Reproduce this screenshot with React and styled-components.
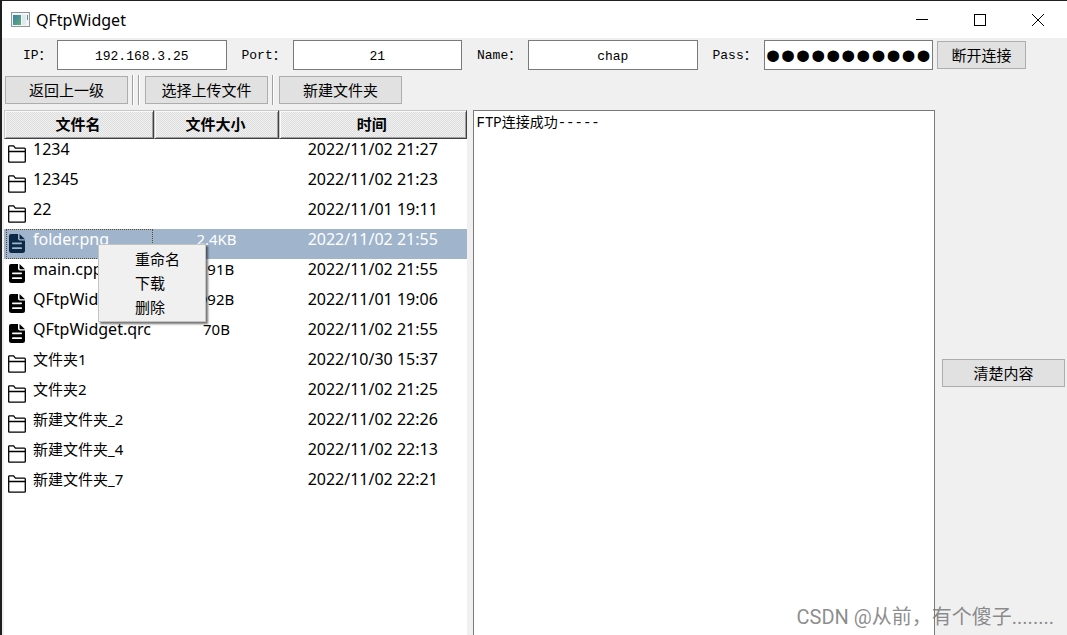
import React, { useState } from "react";
import styled, { createGlobalStyle } from "styled-components";

const uiFont = `"Liberation Mono", "Noto Sans CJK SC", monospace`;
const listFont = `"Noto Sans", "Noto Sans CJK SC", sans-serif`;

const GlobalStyle = createGlobalStyle`
  * {
    box-sizing: border-box;
  }

  body {
    margin: 0;
    color: #000;
    font-family: ${uiFont};
  }
`;

const Window = styled.div`
  position: relative;
  display: flex;
  flex-direction: column;
  height: 100vh;
  overflow: hidden;
  background: #f0f0f0;
  border-top: 1px solid #231f20;
  border-left: 2px solid #1e1e1e;
`;

const TitleBar = styled.header`
  display: flex;
  align-items: center;
  flex: none;
  height: 37px;
  padding-left: 9px;
  background: #fff;
`;

const Title = styled.h1`
  flex: 1;
  margin: 0 0 0 6px;
  font-family: ${listFont};
  font-size: 16px;
  font-weight: 400;
  line-height: 22px;
`;

const CaptionButton = styled.button`
  display: flex;
  align-items: center;
  justify-content: center;
  width: 58px;
  height: 37px;
  padding: 0;
  border: none;
  background: none;
`;

const ConnectBar = styled.form`
  display: flex;
  align-items: center;
  flex: none;
  padding: 2px 41px 0 0;
`;

const FieldLabel = styled.label`
  flex: none;
  width: ${(props) => (props.$first ? 55 : 66)}px;
  padding-top: 2px;
  padding-left: ${(props) => (props.$first ? 21 : 15)}px;
  font-size: 13px;
  line-height: 28px;
  white-space: nowrap;
`;

const Field = styled.input`
  flex: 1;
  min-width: 0;
  height: 30px;
  padding: 2px 1px 0;
  border: 1px solid #7a7a7a;
  border-radius: 0;
  outline: none;
  background: #fff;
  font-family: ${uiFont};
  font-size: 13px;
  text-align: center;

  &[type="password"] {
    padding-top: 0;
    font-family: "Liberation Sans", sans-serif;
    font-size: 43px;
    text-align: left;
  }
`;

const Button = styled.button`
  flex: none;
  width: ${(props) => (props.$compact ? 89 : 123)}px;
  height: 28px;
  padding: 0;
  border: 1px solid #adadad;
  background: #e1e1e1;
  color: #000;
  font-family: ${uiFont};
  font-size: 15px;
`;

const ConnectButton = styled(Button)`
  margin-left: 4px;
`;

const ToolBar = styled.div`
  display: flex;
  align-items: center;
  flex: none;
  gap: 4px;
  height: 30px;
  margin: 5px 0;
  padding-left: 3px;
`;

const Separator = styled.span`
  width: 2px;
  height: 30px;
  margin-right: ${(props) => (props.$last ? 1 : 0)}px;
  border-left: 1px solid #a0a0a0;
  border-right: 1px solid #fff;
`;

const Main = styled.main`
  display: grid;
  grid-template-columns: minmax(0, 1fr) minmax(0, 1fr) 124px;
  gap: 6px;
  flex: 1;
  min-height: 0;
  padding: 0 2px;
`;

const FilePane = styled.section`
  position: relative;
  min-width: 0;
  background: #fff;
`;

const FileTable = styled.table`
  width: 100%;
  table-layout: fixed;
  border-collapse: separate;
  border-spacing: 0;
  font-family: ${listFont};
`;

const HeadCell = styled.th`
  width: ${(props) => props.$width || "auto"};
  height: 29px;
  padding: 0 2px 2px 0;
  border: 1px solid;
  border-color: #c8c8c8 #404040 #404040 #c8c8c8;
  box-shadow: inset 1px 1px #fafafa, inset -1px -1px #a0a0a0;
  background: repeating-conic-gradient(#f0f0f0 0 25%, #dedede 0 50%) 0 0 / 2px 2px;
  font-size: 15px;
  font-weight: 700;
  line-height: 22px;
`;

const Row = styled.tr`
  background: ${(props) => (props.$selected ? "#a0b4cc" : "transparent")};
  color: ${(props) => (props.$selected ? "#fff" : "#000")};
`;

const Cell = styled.td`
  height: 30px;
  padding: 0;
  font-size: ${(props) => (props.$small ? 15 : 16)}px;
  line-height: 20px;
  text-align: center;
  vertical-align: top;
`;

const NameBox = styled.div`
  display: flex;
  align-items: flex-start;
  gap: 7px;
  height: 30px;
  margin: 0 1px 0 2px;
  padding-left: 1px;
  border: 1px dotted ${(props) => (props.$selected ? "#5f4b33" : "transparent")};
  line-height: 18px;
  white-space: nowrap;

  svg {
    flex: none;
    margin-top: 4px;
    color: ${(props) => (props.$selected ? "#0c2a48" : "#000")};
  }
`;

const ContextMenu = styled.menu`
  position: absolute;
  top: 134px;
  left: 94px;
  width: 108px;
  margin: 0;
  padding: 2px;
  border: 1px solid #c4c4c4;
  background: #f0f0f0;
  box-shadow: 2px 2px 2px rgba(0, 0, 0, 0.55);
  list-style: none;
`;

const MenuItem = styled.button`
  display: block;
  width: 100%;
  height: 24px;
  padding: 0 0 0 34px;
  border: none;
  background: none;
  color: #000;
  font-family: ${listFont};
  font-size: 15px;
  line-height: 24px;
  text-align: left;
`;

const Log = styled.textarea`
  width: 100%;
  height: 100%;
  padding: 2px 3px;
  border: 1px solid #7a7a7a;
  border-bottom: none;
  border-radius: 0;
  outline: none;
  resize: none;
  background: #fff;
  color: #000;
  font-family: ${uiFont};
  font-size: 14px;
  line-height: 20px;
`;

const SideBar = styled.aside`
  display: flex;
  align-items: center;
  justify-content: flex-end;
`;

const Watermark = styled.div`
  position: absolute;
  right: 13px;
  bottom: 3px;
  color: rgba(120, 120, 120, 0.85);
  font-family: Roboto, "Noto Sans CJK SC", sans-serif;
  font-size: 20px;
  line-height: 30px;
  pointer-events: none;
`;

const AppIcon = () => (
  <svg width="19" height="15" viewBox="0 0 19 15">
    <defs>
      <linearGradient id="pane" x1="0" y1="0" x2="1" y2="1">
        <stop offset="0" stopColor="#3f7fa6" />
        <stop offset="1" stopColor="#5fae78" />
      </linearGradient>
    </defs>
    <rect x="0.5" y="0.5" width="18" height="14" fill="#f4f5f7" stroke="#8f969c" />
    <rect x="2" y="3" width="8" height="10" fill="url(#pane)" />
    <rect x="11" y="3" width="4" height="10" fill="#e3e8ee" />
    <rect x="16" y="3" width="1" height="5" fill="#4f9a8c" />
  </svg>
);

const FolderIcon = () => (
  <svg width="18" height="19" viewBox="0 -1 18 19" fill="none" stroke="currentColor">
    <path d="M0.7 16.4V1.6Q0.7 0.8 1.5 0.8H5.6L7.4 3.1H16.4Q17.3 3.1 17.3 4V16.4Q17.3 17.2 16.5 17.2H1.5Q0.7 17.2 0.7 16.4ZM0.7 6.5H17.3" strokeWidth="1.3" />
  </svg>
);

const FileIcon = () => (
  <svg width="18" height="19" viewBox="0 0 18 19">
    <path
      fill="currentColor"
      fillRule="evenodd"
      d="M3 0H10V4.5Q10 6.5 12 6.5H17V16.5Q17 19 14.5 19H3.5Q1 19 1 16.5V2Q1 0 3 0ZM11.5 0L17 5.2H12.5Q11.5 5.2 11.5 4.2ZM4.8 8.5Q4 8.5 4 9.3T4.8 10.2H13.2Q14 10.2 14 9.3T13.2 8.5ZM4.8 13.3Q4 13.3 4 14.2T4.8 15.1H13.2Q14 15.1 14 14.2T13.2 13.3Z"
    />
  </svg>
);

const files = [
  { name: "1234", type: "dir", time: "2022/11/02 21:27" },
  { name: "12345", type: "dir", time: "2022/11/02 21:23" },
  { name: "22", type: "dir", time: "2022/11/01 19:11" },
  { name: "folder.png", type: "file", size: "2.4KB", time: "2022/11/02 21:55" },
  { name: "main.cpp", type: "file", size: "191B", time: "2022/11/02 21:55" },
  { name: "QFtpWidget", type: "file", size: "992B", time: "2022/11/01 19:06" },
  { name: "QFtpWidget.qrc", type: "file", size: "70B", time: "2022/11/02 21:55" },
  { name: "文件夹1", type: "dir", cjk: true, time: "2022/10/30 15:37" },
  { name: "文件夹2", type: "dir", cjk: true, time: "2022/11/02 21:25" },
  { name: "新建文件夹_2", type: "dir", cjk: true, time: "2022/11/02 22:26" },
  { name: "新建文件夹_4", type: "dir", cjk: true, time: "2022/11/02 22:13" },
  { name: "新建文件夹_7", type: "dir", cjk: true, time: "2022/11/02 22:21" },
];

const App = () => {
  const [selected, setSelected] = useState("folder.png");
  const [log, setLog] = useState("FTP连接成功-----");

  return (
    <>
      <GlobalStyle />
      <Window>
        <TitleBar>
          <AppIcon />
          <Title>QFtpWidget</Title>
          <CaptionButton aria-label="最小化">
            <svg width="12" height="12" stroke="#000">
              <path d="M0 5.5H12" />
            </svg>
          </CaptionButton>
          <CaptionButton aria-label="最大化">
            <svg width="12" height="12" fill="none" stroke="#000">
              <rect x="0.5" y="0.5" width="11" height="11" />
            </svg>
          </CaptionButton>
          <CaptionButton aria-label="关闭">
            <svg width="12" height="12" stroke="#000">
              <path d="M0 0L12 12M12 0L0 12" />
            </svg>
          </CaptionButton>
        </TitleBar>

        <ConnectBar onSubmit={(e) => e.preventDefault()}>
          <FieldLabel htmlFor="ip" $first>IP：</FieldLabel>
          <Field id="ip" defaultValue="192.168.3.25" />
          <FieldLabel htmlFor="port">Port：</FieldLabel>
          <Field id="port" defaultValue="21" />
          <FieldLabel htmlFor="name">Name：</FieldLabel>
          <Field id="name" defaultValue="chap" />
          <FieldLabel htmlFor="pass">Pass：</FieldLabel>
          <Field id="pass" type="password" defaultValue="12345678901" />
          <ConnectButton $compact>断开连接</ConnectButton>
        </ConnectBar>

        <ToolBar>
          <Button>返回上一级</Button>
          <Separator />
          <Separator $last />
          <Button>选择上传文件</Button>
          <Separator $last />
          <Button>新建文件夹</Button>
        </ToolBar>

        <Main>
          <FilePane>
            <FileTable>
              <thead>
                <tr>
                  <HeadCell $width="150px">文件名</HeadCell>
                  <HeadCell $width="125px">文件大小</HeadCell>
                  <HeadCell>时间</HeadCell>
                </tr>
              </thead>
              <tbody>
                {files.map((file) => (
                  <Row
                    key={file.name}
                    $selected={file.name === selected}
                    onClick={() => setSelected(file.name)}
                  >
                    <Cell $small={file.cjk}>
                      <NameBox $selected={file.name === selected}>
                        {file.type === "dir" ? <FolderIcon /> : <FileIcon />}
                        {file.name}
                      </NameBox>
                    </Cell>
                    <Cell $small>{file.size}</Cell>
                    <Cell>{file.time}</Cell>
                  </Row>
                ))}
              </tbody>
            </FileTable>
            <ContextMenu>
              <li><MenuItem>重命名</MenuItem></li>
              <li><MenuItem>下载</MenuItem></li>
              <li><MenuItem>删除</MenuItem></li>
            </ContextMenu>
          </FilePane>
          <Log aria-label="日志" readOnly value={log} />
          <SideBar>
            <Button onClick={() => setLog("")}>清楚内容</Button>
          </SideBar>
        </Main>
        <Watermark>CSDN @从前，有个傻子........</Watermark>
      </Window>
    </>
  );
};

export default App;
